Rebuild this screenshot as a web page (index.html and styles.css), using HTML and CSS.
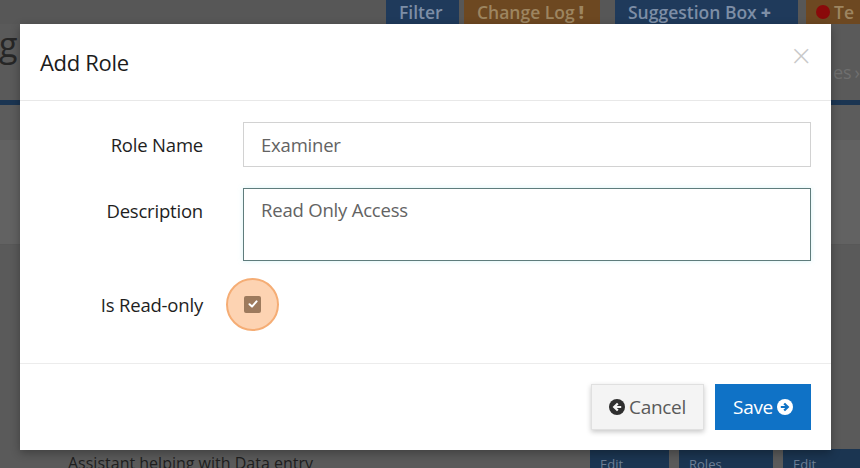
FILE: index.html
```html
<!DOCTYPE html>
<html lang="en">
<head>
<meta charset="utf-8">
<title>Add Role</title>
<link rel="stylesheet" href="styles.css">
</head>
<body>
<div class="page">
  <div class="topbar">
    <span class="tb-btn tb-blue tb-filter">Filter</span>
    <span class="tb-btn tb-orange tb-log">Change Log <b>!</b></span>
    <span class="tb-btn tb-blue tb-sugg">Suggestion Box <b>+</b></span>
    <span class="tb-btn tb-orange tb-te"><i class="dot"></i>Te</span>
  </div>
  <div class="head-row">
    <span class="page-title">g</span>
    <span class="crumb">es<span class="crumb-arrow">›</span></span>
  </div>
  <div class="blue-line"></div>
  <div class="gap-band"></div>
  <div class="grey-band"></div>
  <div class="rest">
    <div class="row-item">
      <span class="row-text">Assistant helping with Data entry</span>
      <div class="row-btns">
        <span class="rb rb1">Edit</span>
        <span class="rb rb2">Roles</span>
        <span class="rb rb3">Edit</span>
      </div>
    </div>
  </div>
</div>

<div class="modal">
  <div class="modal-header">
    <h4 class="modal-title">Add Role</h4>
    <span class="close">×</span>
  </div>
  <div class="modal-body">
    <div class="form-row">
      <label class="lbl">Role Name</label>
      <div class="input">Examiner</div>
    </div>
    <div class="form-row form-row-top">
      <label class="lbl lbl-top">Description</label>
      <div class="textarea">Read Only Access</div>
    </div>
    <div class="form-row">
      <label class="lbl lbl-check">Is Read-only</label>
      <div class="check-wrap">
        <span class="check-halo">
          <span class="check-box">
            <svg width="12" height="12" viewBox="0 0 12 12"><polyline points="2.5,6.3 5,8.6 9.6,3.4" fill="none" stroke="#fff" stroke-width="2" stroke-linecap="round" stroke-linejoin="round"/></svg>
          </span>
        </span>
      </div>
    </div>
  </div>
  <div class="modal-footer">
    <span class="btn btn-cancel">
      <svg class="ico" width="16" height="16" viewBox="0 0 16 16"><circle cx="8" cy="8" r="8" fill="#2f2f2f"/><path d="M3.6 8 L8 3.7 L9.6 5.3 L7.8 7 L12.2 7 L12.2 9 L7.8 9 L9.6 10.7 L8 12.3 Z" fill="#f4f4f4"/></svg>Cancel
    </span>
    <span class="btn btn-save">Save<svg class="ico ico-r" width="16" height="16" viewBox="0 0 16 16"><circle cx="8" cy="8" r="8" fill="#fff"/><path d="M12.4 8 L8 3.7 L6.4 5.3 L8.2 7 L3.8 7 L3.8 9 L8.2 9 L6.4 10.7 L8 12.3 Z" fill="#0f72c6"/></svg></span>
  </div>
</div>
</body>
</html>
```

FILE: styles.css
```css
* { box-sizing: border-box; }
html, body { margin: 0; padding: 0; }
body {
  width: 860px;
  height: 468px;
  overflow: hidden;
  background: #5a5a5a;
  font-family: "Open Sans", "Liberation Sans", sans-serif;
  position: relative;
}

/* dimmed page behind the modal */
.page { width: 860px; }
.topbar {
  height: 24px;
  background: #575757;
  display: flex;
  justify-content: flex-end;
  align-items: stretch;
  gap: 5px;
  margin-right: -20px;
}
.tb-btn {
  display: flex;
  align-items: center;
  padding: 0 13px;
  font-size: 17.5px;
  font-weight: 600;
  line-height: 24px;
  white-space: nowrap;
}
.tb-btn b { margin-left: 4px; }
.tb-blue { background: #1f3a5b; color: #7d8ea6; }
.tb-orange { background: #6d4821; color: #9d8560; }
.tb-filter { width: 73px; }
.tb-log { width: 136px; margin-right: 10px; }
.tb-sugg { width: 183px; margin-right: 3px; }
.tb-te { width: 74px; padding-left: 10px; }
.dot {
  display: inline-block;
  width: 14px;
  height: 14px;
  border-radius: 50%;
  background: #8a0a0a;
  margin-right: 4px;
}
.head-row {
  height: 76px;
  display: flex;
  justify-content: space-between;
  align-items: flex-start;
}
.page-title {
  font-size: 34px;
  color: #262626;
  line-height: 40px;
  margin-top: 0;
  margin-left: -1px;
}
.crumb {
  font-size: 18px;
  color: #6f6f6f;
  margin-top: 36px;
  margin-right: 0;
  white-space: nowrap;
}
.crumb-arrow { margin-left: 3px; }
.blue-line { height: 5px; background: #1b3552; }
.gap-band { height: 35px; background: #5c5c5c; }
.grey-band { height: 105px; background: #626262; border-bottom: 1px solid #585858; }
.rest { padding-top: 204px; }
.row-item { display: flex; justify-content: space-between; }
.row-text {
  margin-left: 68px;
  margin-top: 3px;
  font-size: 16px;
  color: #1e1e1e;
}
.row-btns { display: flex; gap: 10px; margin-right: -10px; }
.rb {
  display: block;
  height: 30px;
  background: #1b3551;
  color: #6d7f95;
  font-size: 13px;
  padding: 6px 10px;
}
.rb1 { width: 79px; }
.rb2 { width: 94px; }
.rb3 { width: 87px; }

/* modal */
.modal {
  position: absolute;
  left: 20px;
  top: 24px;
  width: 811px;
  height: 426px;
  background: #fff;
  box-shadow: 0 3px 9px rgba(0, 0, 0, 0.3);
  display: flex;
  flex-direction: column;
}
.modal-header {
  height: 77px;
  border-bottom: 1px solid #e8e8e8;
  display: flex;
  align-items: center;
  justify-content: space-between;
  padding: 0 20px;
}
.modal-title {
  margin: 0;
  font-size: 22px;
  font-weight: 400;
  color: #1c1c1c;
  margin-top: -1px;
  letter-spacing: -0.3px;
}
.close {
  font-size: 28px;
  line-height: 1;
  color: #c9c9c9;
  margin-right: -2px;
  margin-top: -12px;
  font-family: "DejaVu Sans", sans-serif;
  font-weight: 300;
}
.modal-body {
  height: 263px;
  border-bottom: 1px solid #ececec;
  padding: 21px 20px 0 20px;
  display: flex;
  flex-direction: column;
  gap: 21px;
}
.form-row {
  display: grid;
  grid-template-columns: 163px 1fr;
  column-gap: 40px;
  align-items: center;
}
.form-row-top { align-items: start; }
.lbl {
  text-align: right;
  font-size: 18.5px;
  color: #1e1e1e;
  letter-spacing: -0.2px;
}
.lbl-top { padding-top: 10px; }
.lbl-check { padding-bottom: 4px; }
.input, .textarea {
  border: 1px solid #d2d2d2;
  font-size: 18.5px;
  color: #636363;
  padding: 0 17px;
  letter-spacing: -0.2px;
}
.input {
  height: 45px;
  line-height: 43px;
}
.textarea {
  height: 73px;
  padding-top: 9px;
  line-height: 24px;
  border-color: #5f7c7c;
  box-shadow: 0 0 5px rgba(140, 220, 230, 0.35);
}
.check-wrap {
  height: 52px;
  margin-top: -4px;
  display: flex;
  align-items: center;
}
.check-halo {
  width: 53px;
  height: 53px;
  margin-left: -17px;
  border-radius: 50%;
  background: #fdd3b2;
  border: 2px solid #f5ad75;
  display: flex;
  align-items: center;
  justify-content: center;
}
.check-box {
  width: 17px;
  height: 17px;
  border-radius: 2px;
  background: #9d7a5d;
  display: flex;
  align-items: center;
  justify-content: center;
}
.modal-footer {
  flex: 1;
  display: flex;
  justify-content: flex-end;
  align-items: flex-start;
  gap: 11px;
  padding: 20px 20px 0 20px;
}
.btn {
  height: 46px;
  display: flex;
  align-items: center;
  justify-content: center;
  font-size: 19px;
  letter-spacing: -0.3px;
}
.btn-cancel {
  width: 113px;
  background: #f4f4f4;
  border: 1px solid #e0e0e0;
  color: #5a5a5a;
  box-shadow: 0 2px 5px rgba(0, 0, 0, 0.22);
}
.btn-save {
  width: 96px;
  background: #0f72c6;
  color: #fff;
}
.ico { margin-right: 4px; }
.ico-r { margin-right: 0; margin-left: 4px; }
```
